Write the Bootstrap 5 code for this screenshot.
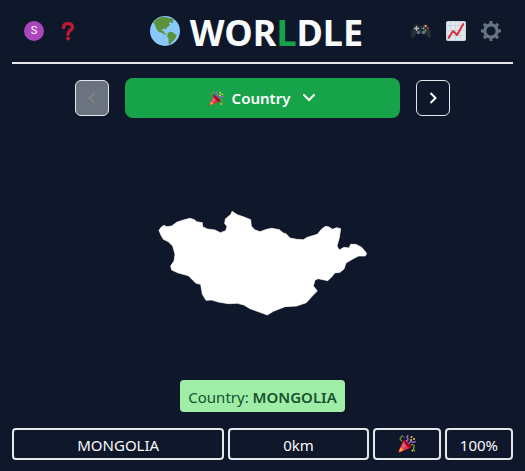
<!DOCTYPE html>
<html lang="en">
<head>
<meta charset="utf-8">
<meta name="viewport" content="width=device-width, initial-scale=1">
<title>Worldle</title>
<link href="https://cdn.jsdelivr.net/npm/bootstrap@5.3.0/dist/css/bootstrap.min.css" rel="stylesheet">
<style>
  body { background: #0f172a; color: #f8fafc; font: 15px/24px "Noto Sans", "Open Sans", sans-serif; }
  svg { display: block; flex: none; }
  .app { min-height: 100vh; }
  .topbar { height: 64px; border-bottom: 2px solid #e5e7eb; }
  .side { flex: 1 1 0; }
  .tools { gap: 15px; }
  .icon-btn { background: none; border: 0; padding: 0; }
  .avatar { width: 20px; height: 20px; background: #ab47bc; color: #fff; font: 11px/20px Roboto, sans-serif; }
  .brand { font-size: 36px; line-height: 40px; font-weight: 700; gap: 8px; margin: 0 12px 0 0; }
  .brand-text { padding-top: 4px; }
  .brand-text span { color: #16a34a; }
  .rounds { margin-top: 14px; }
  .step { width: 34px; height: 36px; border: 1px solid #e5e7eb; border-radius: 6px; background: none; color: #fff; padding: 0; }
  .step:disabled { background: #6b7280; color: #857f7e; }
  .mode { height: 40px; border-radius: 8px; background: #16a34a; color: #fff; font-weight: 600; border: 0; }
  .shape { padding-top: 28px; }
  .answer { background: #a0eda8; color: #14532d; height: 32px; line-height: 34px; border-radius: 4px; }
  .answer b { font-weight: 600; }
  .guess { display: grid; grid-template-columns: repeat(7, 1fr); gap: 4px; margin-bottom: 11px; }
  .cell { height: 32px; border: 2px solid #e5e7eb; border-radius: 4px; line-height: 30px; }
  .span3 { grid-column: span 3; }
  .span2 { grid-column: span 2; }
</style>
<script src="https://cdn.jsdelivr.net/npm/bootstrap@5.3.0/dist/js/bootstrap.bundle.min.js"></script>
</head>
<body>
<svg width="0" height="0" class="position-absolute" aria-hidden="true">
  <symbol id="popper" viewBox="0 0 36 36">
    <path fill="#dd2e44" d="M11 10 1 33q-1 3 2 2l23-10Q22 13 11 10z"/>
    <path fill="#ea596e" d="M12 11 4 31l8-4 5-7q-1-6-5-9z"/>
    <path fill="#a0041e" d="M11 9q12 2 16 15-1 3-5 1Q14 20 10 12z"/>
    <path fill="#ffac33" d="m5 25 6 5-6 3-3-1z"/>
    <path fill="none" stroke="#5c913b" stroke-width="3" d="M8 12q-6-3-2-7t1-4M26 20q8-2 6 4t2 9"/>
    <path fill="none" stroke="#9266cc" stroke-width="3" d="M16 13q6-3 3-7t2-5M22 18q1-6 6-4t7-2"/>
    <g fill="#ffcc4d"><circle cx="27" cy="4" r="2"/><circle cx="32" cy="8" r="2"/><circle cx="26" cy="10" r="2"/><circle cx="12" cy="4" r="1"/><circle cx="29" cy="31" r="2"/></g>
  </symbol>
</svg>

<div class="app d-flex flex-column px-2 mx-1">
  <header class="topbar d-flex align-items-center">
    <div class="side d-flex align-items-center gap-3 ps-2 ms-1">
      <button class="icon-btn avatar rounded-circle" aria-label="Account">S</button>
      <button class="icon-btn" aria-label="How to play">
        <svg width="16" height="20" viewBox="0 0 16 20"><path d="M3.5 6.5C3.5 1 12.5 1 12.5 6.2 12.5 9.5 8 9 8 13.4" fill="none" stroke="#be1931" stroke-width="3.4" stroke-linecap="round"/><circle cx="8" cy="17.6" r="2" fill="#be1931"/></svg>
      </button>
    </div>
    <h1 class="brand d-flex align-items-center">
      <svg width="32" height="32" viewBox="0 0 32 32" aria-hidden="true"><circle cx="15" cy="16" r="15" fill="#88c9f9"/><path fill="#5c913b" d="M3.500 7.500 7 4l5-2.200 4 .2 3 1.400 1-.6 4 2-1.500.8 1 2-2 .5-1-1.500-1.500 2 1 1.500-3 2.500-1 2-1.500-1-2 .4-.4 2 2 .3.4 1.800 2 1-1 .7-3-1.600-4.500-2L6 13 5 10zM18 18l2-1.200 3 .5 1.500 1.800 2 .4-.6 3-2.500 3-3.400 3.800-1.500-.5.2-5-1.700-2.500z"/></svg>
      <div class="brand-text">WOR<span>L</span>DLE</div>
    </h1>
    <div class="side tools d-flex align-items-center justify-content-end pe-2 me-1">
      <button class="icon-btn" aria-label="More games">
        <svg width="20" height="20" viewBox="0 0 20 20"><path fill="#292f33" d="M3 4.500Q6 2 9 5h2q3-3 6-.5Q20 10 20 15q-1 3-3 1l-3-4H6l-3 4q-2 2-3-1Q0 10 3 4.500z"/><path stroke="#aab8c2" stroke-width="1.300" d="M5.500 5v5M3 7.500h5"/><circle cx="7.500" cy="11.500" r="1.700" fill="#66757f"/><circle cx="12.500" cy="11.500" r="1.700" fill="#66757f"/><circle cx="14.500" cy="5" r="1" fill="#ffcc4d"/><circle cx="12.500" cy="7.300" r="1" fill="#55acee"/><circle cx="16.700" cy="7.300" r="1" fill="#dd2e44"/><circle cx="14.500" cy="9.500" r="1" fill="#77b255"/></svg>
      </button>
      <button class="icon-btn" aria-label="Statistics">
        <svg width="20" height="20" viewBox="0 0 20 20"><rect width="20" height="20" rx="2" fill="#ccd6dd"/><path fill="#e1e8ed" d="M1 1h3v3H1zm4 0h4v3H5zm5 0h4v3h-4zm5 0h4v3h-4zM1 5h3v4H1zm4 0h4v4H5zm5 0h4v4h-4zm5 0h4v4h-4zM1 10h3v4H1zm4 0h4v4H5zm5 0h4v4h-4zm5 0h4v4h-4zM1 15h3v4H1zm4 0h4v4H5zm5 0h4v4h-4zm5 0h4v4h-4z"/><path d="m2.500 17 4.500-7 4 4L17.300 3" fill="none" stroke="#dd2e44" stroke-width="2" stroke-linecap="round" stroke-linejoin="round"/></svg>
      </button>
      <button class="icon-btn" aria-label="Settings">
        <svg width="20" height="20" viewBox="0 0 20 20" fill="none" stroke="#66757f"><circle cx="10" cy="10" r="6.200" stroke-width="3.200"/><path stroke-width="3" d="M10 0v3M10 17v3M0 10h3M17 10h3M2.930 2.930l2.200 2.200M14.870 14.870l2.200 2.200M2.930 17.070l2.200-2.200M14.870 5.130l2.200-2.200"/></svg>
      </button>
    </div>
  </header>

  <main class="flex-grow-1 d-flex flex-column">
    <div class="rounds d-flex align-items-center gap-3 w-75 mx-auto">
      <button class="step d-flex align-items-center justify-content-center" disabled aria-label="Previous round">
        <svg width="8" height="12" viewBox="0 0 8 12" fill="none" stroke="currentColor" stroke-width="2"><path d="M6.500 1 1.500 6l5 5"/></svg>
      </button>
      <button class="mode flex-grow-1 d-flex align-items-center justify-content-center gap-2" aria-haspopup="listbox">
        <svg width="15" height="15" aria-hidden="true"><use href="#popper"/></svg>
        Country
        <svg class="ms-1" width="14" height="8" viewBox="0 0 14 8" fill="none" stroke="currentColor" stroke-width="2" stroke-linecap="round"><path d="m2 1 5 5 5-5"/></svg>
      </button>
      <button class="step d-flex align-items-center justify-content-center" aria-label="Next round">
        <svg width="8" height="12" viewBox="0 0 8 12" fill="none" stroke="currentColor" stroke-width="2"><path d="m1.500 1 5 5-5 5"/></svg>
      </button>
    </div>

    <div class="shape flex-grow-1 d-flex align-items-center justify-content-center">
      <svg width="210" height="105" viewBox="24 30 630 315" role="img" aria-label="Country outline"><path fill="#fff" stroke="#fff" stroke-width="2" stroke-linejoin="round" d="M27 88 34 78 42 73 50 77 65 75 80 64 100 57 120 52 133 56 140 62 157 65 158 77 172 84 195 87 211 95 227 89 231 76 224 68 226 54 243 40 246 31 262 41 282 48 302 56 304 75 314 86 330 92 350 85 365 82 388 86 400 96 408 98 420 111 440 115 460 116 472 109 502 100 515 84 527 76 537 78 547 85 560 80 572 83 568 110 561 135 568 147 582 139 597 141 602 130 617 130 635 139 650 157 646 165 626 165 612 172 588 186 582 204 570 214 554 216 545 228 533 239 505 233 495 237 490 255 502 270 485 287 469 305 440 315 405 317 370 331 352 342 330 334 300 323 282 312 262 307 235 308 205 303 185 297 168 298 157 280 152 250 138 247 115 224 85 216 65 207 62 195 72 180 75 160 68 135 55 122 40 115 33 103z"/></svg>
    </div>

    <div class="answer align-self-center px-2 mb-3">Country: <b>MONGOLIA</b></div>
    <div class="guess text-center">
      <div class="cell span3">MONGOLIA</div>
      <div class="cell span2">0km</div>
      <div class="cell d-flex align-items-center justify-content-center"><svg width="18" height="18" role="img" aria-label="Correct"><use href="#popper"/></svg></div>
      <div class="cell">100%</div>
    </div>
  </main>
</div>
</body>
</html>
